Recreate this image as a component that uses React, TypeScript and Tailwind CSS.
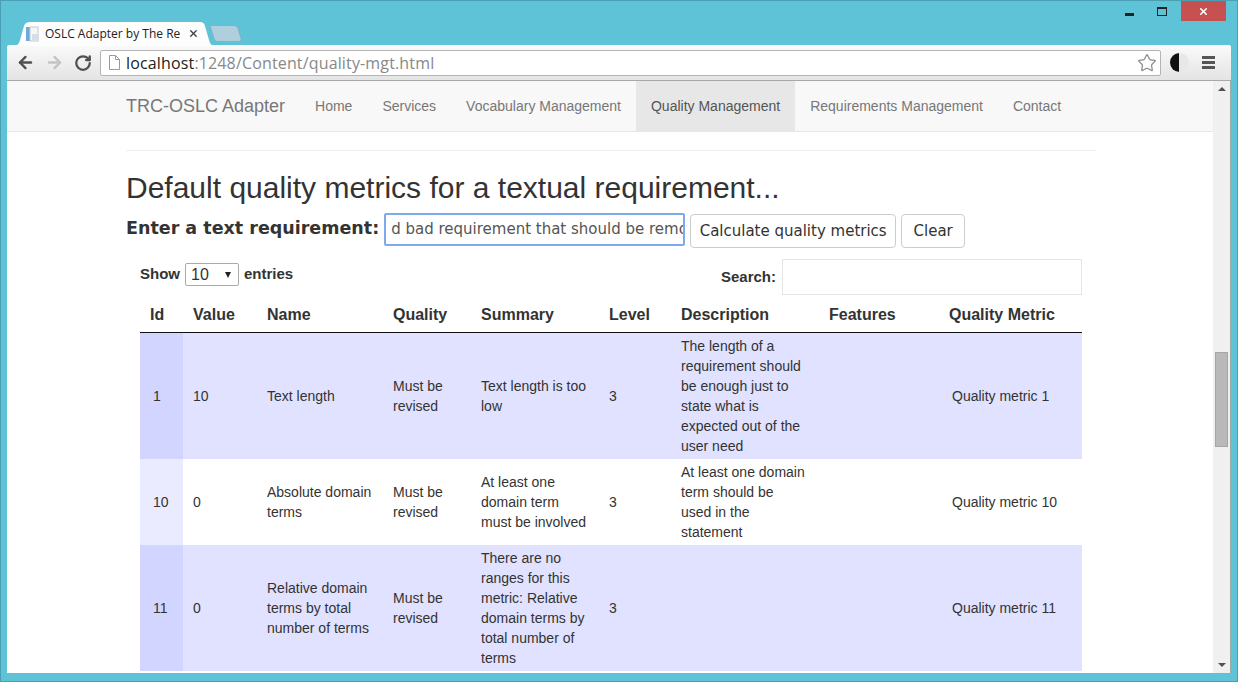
import { ArrowLeft, ArrowRight, RotateCw, Star, X } from "lucide-react"

const rows = [
  {
    id: "1",
    value: "10",
    name: ["Text length"],
    quality: ["Must be", "revised"],
    summary: ["Text length is too", "low"],
    level: "3",
    description: ["The length of a", "requirement should", "be enough just to", "state what is", "expected out of the", "user need"],
    metric: "Quality metric 1",
  },
  {
    id: "10",
    value: "0",
    name: ["Absolute domain", "terms"],
    quality: ["Must be", "revised"],
    summary: ["At least one", "domain term", "must be involved"],
    level: "3",
    description: ["At least one domain", "term should be", "used in the", "statement"],
    metric: "Quality metric 10",
  },
  {
    id: "11",
    value: "0",
    name: ["Relative domain", "terms by total", "number of terms"],
    quality: ["Must be", "revised"],
    summary: ["There are no", "ranges for this", "metric: Relative", "domain terms by", "total number of", "terms"],
    level: "3",
    description: [],
    metric: "Quality metric 11",
  },
]

const navItems = ["Home", "Services", "Vocabulary Management", "Quality Management", "Requirements Management", "Contact"]

function Lines({ lines }: { lines: string[] }) {
  return (
    <>
      {lines.map((line) => (
        <div key={line} className="whitespace-nowrap">
          {line}
        </div>
      ))}
    </>
  )
}

function TabIcon() {
  return (
    <svg width="16" height="16" viewBox="0 0 16 16" className="shrink-0">
      <rect x="1" y="1" width="5" height="14" fill="#6fa8dc" />
      <rect x="5" y="1" width="8" height="14" fill="#f4f6f8" stroke="#c4ccd4" />
      <rect x="7" y="8" width="7" height="6" fill="#d5dde6" />
    </svg>
  )
}

function PageIcon() {
  return (
    <svg width="12" height="15" viewBox="0 0 12 15" className="shrink-0">
      <path d="M1.5.5h6l4 4v10h-10z M7.5.5v4h4" fill="#fff" stroke="#9a9a9a" />
    </svg>
  )
}

export default function App() {
  return (
    <div className="flex h-[682px] w-[1238px] flex-col overflow-hidden border border-[#4a9fb3] bg-[#5fc3d8] font-['Liberation_Sans',sans-serif] text-[#333]">
      {/* title bar + tabs */}
      <div className="relative flex h-[44px] shrink-0 items-end pl-[12px]">
        <div className="relative flex h-[23px] w-[200px] items-center pl-[12px] pr-[14px]">
          <svg className="absolute inset-0" width="200" height="24" viewBox="0 0 200 24">
            <path d="M0 24c4 0 6-2 7-6L11 4c1-3 3-4 6-4h170c3 0 4 1 5 4l4 14c1 4 3 6 6 6z" fill="#fdfdfd" />
          </svg>
          <div className="relative flex w-full items-center">
            <TabIcon />
            <span className="ml-[4px] w-[136px] overflow-hidden whitespace-nowrap font-['Open_Sans',sans-serif] text-[12px] text-[#222]">
              OSLC Adapter by The Reu
            </span>
            <X size={11} strokeWidth={3} className="ml-[8px] text-[#444]" />
          </div>
        </div>
        <svg className="mb-[3px] -ml-[3px]" width="32" height="17" viewBox="0 0 32 17">
          <path d="M0 .5h24c2 0 3 1 4 3l3 10c.5 2-.5 3-2 3H8c-2 0-3-1-4-3z" fill="#aecfdc" stroke="#7fb4c6" />
        </svg>
        {/* window buttons */}
        <div className="absolute right-[11px] top-0 flex items-start">
          <div className="flex h-[20px] w-[43px] items-center justify-center">
            <div className="mt-[6px] h-[3px] w-[9px] bg-[#222]" />
          </div>
          <div className="flex h-[20px] w-[22px] items-center justify-center">
            <div className="h-[9px] w-[10px] border border-t-2 border-[#222]" />
          </div>
          <div className="ml-[8px] flex h-[20px] w-[45px] items-center justify-center bg-[#c75050]">
            <X size={11} strokeWidth={3.5} className="text-white" />
          </div>
        </div>
      </div>

      {/* chrome toolbar */}
      <div className="mx-[6px] flex h-[36px] shrink-0 items-center rounded-t-[2px] border-b border-[#a8a8a8] bg-gradient-to-b from-[#fafafa] to-[#e4e4e4] pl-[9px]">
        <ArrowLeft size={19} strokeWidth={3} className="text-[#505050]" />
        <ArrowRight size={19} strokeWidth={3} className="ml-[10px] text-[#c4c4c4]" />
        <RotateCw size={18} strokeWidth={3} className="ml-[10px] text-[#505050]" />
        <div className="ml-[8px] flex h-[26px] w-[1061px] items-center rounded-[2px] border border-[#b4b4b4] bg-white pl-[7px] pr-[3px]">
          <PageIcon />
          <span className="ml-[6px] text-[16px] tracking-[0.15px] text-[#888] font-['Open_Sans',sans-serif]">
            <span className="text-[#222]">localhost</span>:1248/Content/quality-mgt.html
          </span>
          <Star size={20} strokeWidth={1.5} className="ml-auto text-[#8a8a8a]" />
        </div>
        <div className="ml-[9px] h-[19px] w-[19px] rounded-full bg-gradient-to-r from-[#111] from-50% to-[#e8e8e8] to-50%" />
        <div className="ml-[13px] flex w-[13px] flex-col gap-[2px]">
          <div className="h-[3px] bg-[#555]" />
          <div className="h-[3px] bg-[#555]" />
          <div className="h-[3px] bg-[#555]" />
        </div>
      </div>

      {/* viewport */}
      <div className="mx-[6px] flex min-h-0 flex-1 border-b border-r border-[#9aa] bg-white">
        <div className="min-w-0 flex-1 overflow-hidden">
          <nav className="flex h-[51px] items-stretch border-b border-[#e7e7e7] bg-[#f8f8f8] pl-[119px] text-[14px] text-[#777]">
            <div className="mr-[15px] flex items-center text-[18px] font-normal">TRC-OSLC Adapter</div>
            {navItems.map((item) => (
              <div
                key={item}
                className={
                  item === "Quality Management"
                    ? "flex items-center bg-[#e7e7e7] px-[15px] text-[#555]"
                    : "flex items-center px-[15px]"
                }
              >
                {item}
              </div>
            ))}
          </nav>

          <div className="ml-[119px] w-[970px]">
            <hr className="mt-[18px] border-[#eee]" />
            <h2 className="mt-[20px] text-[30px] leading-[33px]">Default quality metrics for a textual requirement...</h2>

            <div className="mt-[9px] flex items-start">
              <label className="mt-[3px] font-['DejaVu_Sans',sans-serif] text-[17.5px] leading-[25px] font-bold">
                Enter a text requirement:
              </label>
              <div className="ml-[5px] flex h-[33px] w-[301px] items-center overflow-hidden rounded-[2px] border-2 border-[#7ea9ea] px-[5px] font-['DejaVu_Sans',sans-serif] text-[15px] whitespace-nowrap text-[#555]">
                d bad requirement that should be remo
              </div>
              <button className="ml-[5px] mt-[1px] h-[34px] w-[206px] rounded-[4px] border border-[#ccc] bg-white font-['DejaVu_Sans',sans-serif] text-[15px] text-[#333]">
                Calculate quality metrics
              </button>
              <button className="ml-[5px] mt-[1px] h-[34px] w-[64px] rounded-[4px] border border-[#ccc] bg-white font-['DejaVu_Sans',sans-serif] text-[15px] text-[#333]">
                Clear
              </button>
            </div>

            <div className="ml-[14px] w-[942px]">
              <div className="flex h-[51px] items-start justify-between pt-[15px] text-[15px] font-bold">
                <div className="flex items-center">
                  Show
                  <div className="mx-[5px] flex h-[23px] w-[54px] items-center justify-between rounded-[2px] border border-[#aaa] pl-[5px] pr-[7px] text-[16px] font-normal">
                    10
                    <span className="h-0 w-0 border-x-[3.5px] border-t-[6px] border-x-transparent border-t-[#222]" />
                  </div>
                  entries
                </div>
                <div className="-mt-[4px] flex items-center">
                  Search:
                  <div className="ml-[6px] h-[36px] w-[300px] border border-[#e5e5e5]" />
                </div>
              </div>

              <table className="w-[942px] table-fixed border-collapse text-[14px] leading-[20px]">
                <colgroup>
                  <col className="w-[43px]" />
                  <col className="w-[74px]" />
                  <col className="w-[126px]" />
                  <col className="w-[88px]" />
                  <col className="w-[128px]" />
                  <col className="w-[72px]" />
                  <col className="w-[148px]" />
                  <col className="w-[120px]" />
                  <col className="w-[143px]" />
                </colgroup>
                <thead>
                  <tr className="h-[33px] border-b border-[#111] text-[16px] font-bold">
                    {["Id", "Value", "Name", "Quality", "Summary", "Level", "Description", "Features", "Quality Metric"].map((h) => (
                      <th key={h} className="px-[10px] text-left font-bold whitespace-nowrap">
                        {h}
                      </th>
                    ))}
                  </tr>
                </thead>
                <tbody>
                  {rows.map((row, i) => (
                    <tr key={row.id} className={i % 2 === 0 ? "bg-[#e0e2ff]" : "bg-white"}>
                      <td className={i % 2 === 0 ? "bg-[#d2d5ff] py-[3px] pl-[13px]" : "bg-[#eaebff] py-[3px] pl-[13px]"}>{row.id}</td>
                      <td className="py-[3px] pl-[10px]">{row.value}</td>
                      <td className="py-[3px] pl-[10px]">
                        <Lines lines={row.name} />
                      </td>
                      <td className="py-[3px] pl-[10px]">
                        <Lines lines={row.quality} />
                      </td>
                      <td className="py-[3px] pl-[10px]">
                        <Lines lines={row.summary} />
                      </td>
                      <td className="py-[3px] pl-[10px]">{row.level}</td>
                      <td className="py-[3px] pl-[10px]">
                        <Lines lines={row.description} />
                      </td>
                      <td className="py-[3px] pl-[10px]" />
                      <td className="py-[3px] pl-[13px] whitespace-nowrap">{row.metric}</td>
                    </tr>
                  ))}
                </tbody>
              </table>
            </div>
          </div>
        </div>

        {/* scrollbar */}
        <div className="flex w-[17px] shrink-0 flex-col items-center justify-between bg-[#f0f0f0] py-[6px]">
          <span className="h-0 w-0 border-x-[4px] border-b-[4px] border-x-transparent border-b-[#505050]" />
          <div className="mb-auto mt-[261px] h-[95px] w-[13px] border border-[#a6a6a6] bg-[#b9b9b9]" />
          <span className="h-0 w-0 border-x-[4px] border-t-[4px] border-x-transparent border-t-[#505050]" />
        </div>
      </div>
      <div className="h-[7px] shrink-0" />
    </div>
  )
}
